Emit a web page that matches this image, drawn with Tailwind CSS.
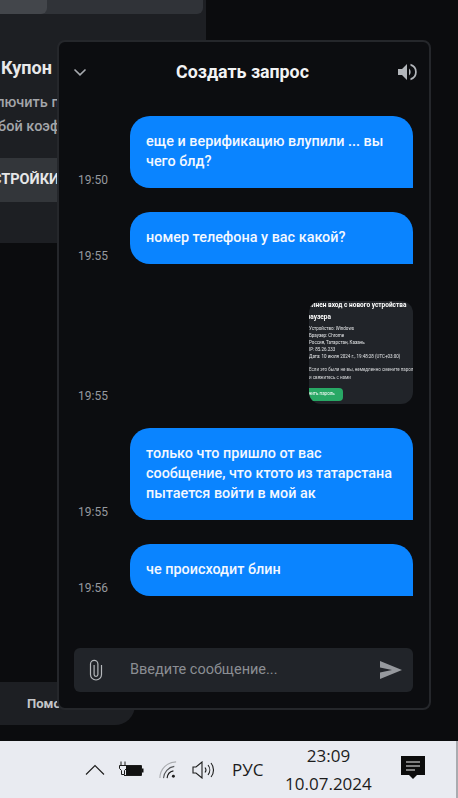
<!DOCTYPE html>
<html lang="ru">
<head>
  <meta charset="UTF-8">
  <meta name="viewport" content="width=device-width, initial-scale=1.0">
  <script src="https://cdn.jsdelivr.net/npm/@tailwindcss/browser@4"></script>
  <title>Создать запрос</title>
</head>
<body class="relative w-[458px] h-[798px] overflow-hidden bg-[#0b0c0e] font-['Roboto',sans-serif]">
  <div class="flex flex-col h-[741px]">
    <!-- page behind the chat -->
    <div class="w-[206px] h-[243px] shrink-0 bg-[#1d1f23] overflow-hidden">
      <div class="w-[203px] h-[14px] flex bg-[#303338] rounded-br-md">
        <div class="w-[47px] bg-[#43464b] rounded-br-md"></div>
      </div>
      <p class="mt-[44px] pl-px text-lg leading-5 font-bold text-[#e8e9ea]">Купон</p>
      <p class="mt-[13px] -ml-[20px] text-[14.5px] leading-6 font-medium text-[#a4a6aa] whitespace-nowrap">включить промокод<br><span class="-ml-[2px]">любой коэффициент</span></p>
      <div class="mt-[19px] w-[203px] h-[44px] flex items-center bg-[#33363a] rounded-r-md overflow-hidden">
        <span class="-ml-[28px] text-[14.5px] font-bold text-[#e6e7e8] whitespace-nowrap">НАСТРОЙКИ</span>
      </div>
    </div>
    <div class="mt-[439px] w-[135px] h-[43px] flex items-center pl-[27px] bg-[#1d1f23] rounded-br-[20px]">
      <span class="text-[13px] font-bold text-[#c4c6c9]">Помощь</span>
    </div>
  </div>

  <!-- chat window -->
  <div class="absolute left-[57px] top-[40px] w-[374px] h-[670px] flex flex-col bg-[#0c0d10] border-2 border-[#25272b] rounded-lg">
    <div class="h-[60px] shrink-0 flex items-center justify-between pl-[13px] pr-[12px]">
      <svg class="w-[16px] h-[16px] text-[#a8abb0]" viewBox="0 0 16 16" fill="none" stroke="currentColor" stroke-width="1.6"><path d="M2.5 5.5 8 10.8l5.5-5.3"/></svg>
      <span class="text-[17.8px] font-bold text-[#f2f3f4]">Создать запрос</span>
      <svg class="w-[20px] h-[20px] text-[#b3b6bb]" viewBox="0 0 20 20" fill="currentColor"><path d="M1 7h4l5-5v16l-5-5H1z"/><path d="M12 6.5a4.5 4.5 0 0 1 0 7zM13.5 1.8a8.5 8.5 0 0 1 0 16.4v-2a6.5 6.5 0 0 0 0-12.4z"/></svg>
    </div>

    <div class="flex-1 flex flex-col gap-6 pt-[14px] pr-[16px] pl-[19px]">
      <div class="flex items-end justify-between">
        <span class="text-xs leading-4 text-[#96999f]">19:50</span>
        <div class="w-[283px] p-4 text-[14.4px] leading-5 font-medium text-[#f4f8ff] bg-[#0a84ff] rounded-[20px] rounded-br-none">еще и верификацию влупили ... вы чего блд?</div>
      </div>
      <div class="flex items-end justify-between">
        <span class="text-xs leading-4 text-[#96999f]">19:55</span>
        <div class="w-[283px] p-4 text-[14.4px] leading-5 font-medium text-[#f4f8ff] bg-[#0a84ff] rounded-[20px] rounded-br-none">номер телефона у вас какой?</div>
      </div>
      <div class="mt-[13px] flex items-end justify-between">
        <span class="text-xs leading-4 text-[#96999f]">19:55</span>
        <div class="w-[104px] h-[103px] overflow-hidden bg-[#212429] rounded-xl text-white whitespace-nowrap">
          <div class="blur-[0.3px]">
            <p class="-ml-[14px] text-[6.5px] leading-2 font-bold">Выполнен вход с нового устройства</p>
            <p class="mt-[4px] -ml-[6px] text-[6.5px] leading-2 font-bold">браузера</p>
            <div class="mt-[4px] text-[4.5px] leading-[7px] text-[#e4e6e8]">
              <p>Устройство: Windows</p>
              <p>Браузер: Chrome</p>
              <p>Россия, Татарстан, Казань</p>
              <p>IP: 85.26.233</p>
              <p>Дата: 10 июля 2024 г., 19:48:28 (UTC+03:00)</p>
            </div>
            <p class="mt-[6px] text-[4.5px] leading-2 text-[#d8dadc]">Если это были не вы, немедленно смените пароль<br>и свяжитесь с нами</p>
            <div class="mt-[6px] w-[34px] h-[13px] flex items-center overflow-hidden bg-[#28a865] rounded-r-sm text-[4.5px]"><span class="-ml-[9px]">Сменить пароль</span></div>
          </div>
        </div>
      </div>
      <div class="flex items-end justify-between">
        <span class="text-xs leading-4 text-[#96999f]">19:55</span>
        <div class="w-[283px] p-4 text-[14.4px] leading-5 font-medium text-[#f4f8ff] bg-[#0a84ff] rounded-[20px] rounded-br-none">только что пришло от вас сообщение, что ктото из татарстана пытается войти в мой ак</div>
      </div>
      <div class="flex items-end justify-between">
        <span class="text-xs leading-4 text-[#96999f]">19:56</span>
        <div class="w-[283px] p-4 text-[14.4px] leading-5 font-medium text-[#f4f8ff] bg-[#0a84ff] rounded-[20px] rounded-br-none">че происходит блин</div>
      </div>
    </div>

    <div class="ml-[15px] mr-[16px] mb-[16px] h-[44px] shrink-0 flex items-center pl-[14px] pr-[11px] bg-[#212429] rounded-md">
      <svg class="w-[16px] h-[22px] text-[#b5b8bc]" viewBox="0 0 16 22" fill="none" stroke="currentColor" stroke-width="1.2"><path d="M13.5 6v9.5a5.5 5.5 0 0 1-11 0V5a3.7 3.7 0 0 1 7.4 0v10.5a1.9 1.9 0 0 1-3.8 0V6"/></svg>
      <span class="ml-[26px] flex-1 text-[14.5px] text-[#8b8e93]">Введите сообщение...</span>
      <svg class="w-[22px] h-[18px] text-[#96999e]" viewBox="0 0 22 18" fill="currentColor"><path d="M0 0 22 9 0 18v-6.5L12 9 0 6.5z"/></svg>
    </div>
  </div>

  <!-- windows taskbar -->
  <div class="h-[57px] flex items-center bg-[#e9ebf1] border-r-2 border-[#a9abb0] text-[#1c1c1c] font-['Open_Sans',sans-serif]">
    <svg class="ml-[85px] w-[20px] h-[12px]" viewBox="0 0 20 12" fill="none" stroke="#1c1c1c" stroke-width="1.1"><path d="M1 10.5 10 1.5l9 9"/></svg>
    <svg class="ml-[13px] w-[26px] h-[18px]" viewBox="0 0 26 18" fill="none" stroke="#1c1c1c"><path d="M3 0.5v4M7 0.5v4M1.5 4.5h7v3l-2 2v4h-3v-4l-2-2z" stroke-width="1"/><path d="M8 4.5h15.5v10H6" stroke-width="1"/><rect x="8" y="5" width="15" height="9" fill="#111" stroke="none"/><rect x="24" y="7.5" width="1.5" height="4" fill="#111" stroke="none"/></svg>
    <svg class="ml-[15px] w-[18px] h-[18px]" viewBox="0 0 20 20" fill="none" stroke-width="1.2"><path d="M1 19A18 18 0 0 1 19 1" stroke="#a9abaf"/><path d="M5 19A14 14 0 0 1 17 6" stroke="#55575a"/><path d="M9 19A9 9 0 0 1 16 11" stroke="#1c1c1c"/><circle cx="16" cy="17" r="1.6" fill="#1c1c1c"/></svg>
    <svg class="ml-[15px] w-[23px] h-[18px]" viewBox="0 0 23 18" fill="none" stroke="#1c1c1c" stroke-width="1.1"><path d="M1 6h3l6-5v16l-6-5H1z"/><path d="M13 6.5a4 4 0 0 1 0 5M16 4a8 8 0 0 1 0 10M19 2a11 11 0 0 1 0 14"/></svg>
    <span class="ml-[17px] text-[17px]">РУС</span>
    <div class="ml-[20px] w-[90px] text-center text-[17px] leading-7">
      <p>23:09</p>
      <p>10.07.2024</p>
    </div>
    <svg class="ml-[28px] mb-[4px] w-[24px] h-[24px]" viewBox="0 0 24 24"><path d="M0 0h24v19h-8l-4 4-4-4H0z" fill="#0c0c0c"/><path d="M5 6h14M5 10h14M5 14h9" stroke="#f0f0f0" stroke-width="1"/></svg>
  </div>
</body>
</html>
